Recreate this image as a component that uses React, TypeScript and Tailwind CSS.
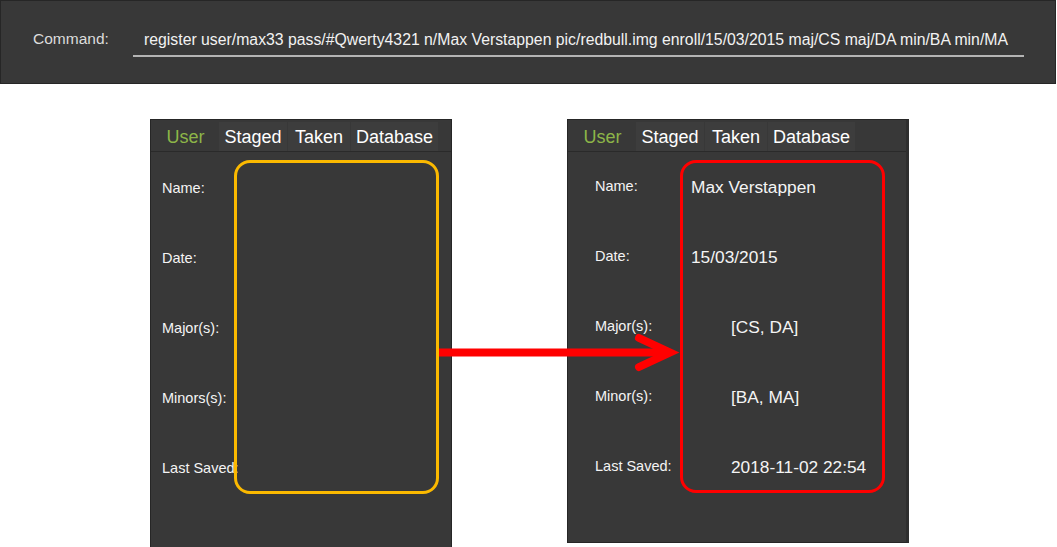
import React from "react";

const TABS = [
  { name: "User", w: "w-[65px]", active: true },
  { name: "Staged", w: "w-[68px]", active: false },
  { name: "Taken", w: "w-[62px]", active: false },
  { name: "Database", w: "w-[87px]", active: false },
];

function TabRow() {
  return (
    <div className="flex gap-[1px] pl-[2px] pt-[2px] border-b border-[#2a2a2a] h-[32px]">
      {TABS.map((t) => (
        <div
          key={t.name}
          className={`${t.w} h-[29px] flex items-center justify-center text-[18px] leading-none ${
            t.active ? "text-[#8db548]" : "bg-[#3d3d3d] text-white"
          }`}
        >
          {t.name}
        </div>
      ))}
    </div>
  );
}

const LABELS_LEFT = ["Name:", "Date:", "Major(s):", "Minors(s):", "Last Saved:"];
const ROWS_RIGHT = [
  { label: "Name:", value: "Max Verstappen", indent: false },
  { label: "Date:", value: "15/03/2015", indent: false },
  { label: "Major(s):", value: "[CS, DA]", indent: true },
  { label: "Minor(s):", value: "[BA, MA]", indent: true },
  { label: "Last Saved:", value: "2018-11-02 22:54", indent: true },
];

export default function App() {
  return (
    <div className="relative w-[1057px] h-[547px] bg-white overflow-hidden font-['Liberation_Sans',Arial,sans-serif]">
      {/* Command bar */}
      <div className="w-[1056px] h-[84px] bg-[#383838] border border-[#262626] flex items-start pl-[32px] pt-[29px]">
        <span className="text-[15.5px] leading-[18px] text-[#dcdcdc] w-[100px]">Command:</span>
        <div className="mt-[1px] w-[891px] border-b-2 border-[#b4b4b4] pl-[11px] pb-[6px] text-[15.8px] leading-[18px] text-[#f2f2f2] whitespace-nowrap">
          register user/max33 pass/#Qwerty4321 n/Max Verstappen pic/redbull.img enroll/15/03/2015 maj/CS maj/DA min/BA min/MA
        </div>
      </div>

      {/* Panels */}
      <div className="flex items-start mt-[35px]">
        <div className="ml-[150px] w-[302px] h-[430px] bg-[#383838] border border-[#262626]">
          <TabRow />
          <div className="flex flex-col mt-[2px]">
            {LABELS_LEFT.map((l) => (
              <div key={l} className="h-[70px] flex items-center pl-[11px] text-[14.5px] text-[#f4f4f4]">
                {l}
              </div>
            ))}
          </div>
        </div>

        <div className="ml-[115px] w-[342px] h-[424px] bg-[#383838] border border-[#262626] border-r-[3px] border-r-[#2e2e2e]">
          <TabRow />
          <div className="flex flex-col">
            {ROWS_RIGHT.map((r) => (
              <div key={r.label} className="h-[70px] flex items-center text-[#f4f4f4]">
                <span className="w-[123px] pl-[27px] text-[14.5px]">{r.label}</span>
                <span className={`text-[17.3px] pt-[2px] ${r.indent ? "pl-[40px]" : ""}`}>{r.value}</span>
              </div>
            ))}
          </div>
        </div>
      </div>

      {/* Annotation overlays */}
      <div className="absolute left-[234px] top-[160px] w-[205px] h-[334px] border-[3px] border-[#fbb900] rounded-[16px]" />
      <div className="absolute left-[680px] top-[160px] w-[205px] h-[333px] border-[3px] border-[#ff0000] rounded-[16px]" />
      <svg className="absolute left-0 top-0" width="1057" height="547" viewBox="0 0 1057 547">
        <line x1="439" y1="352.5" x2="668" y2="352.5" stroke="#ff0000" strokeWidth="8" />
        <polyline
          points="639,338 670,352.5 639,367"
          fill="none"
          stroke="#ff0000"
          strokeWidth="8"
          strokeLinecap="round"
          strokeLinejoin="miter"
        />
      </svg>
    </div>
  );
}
